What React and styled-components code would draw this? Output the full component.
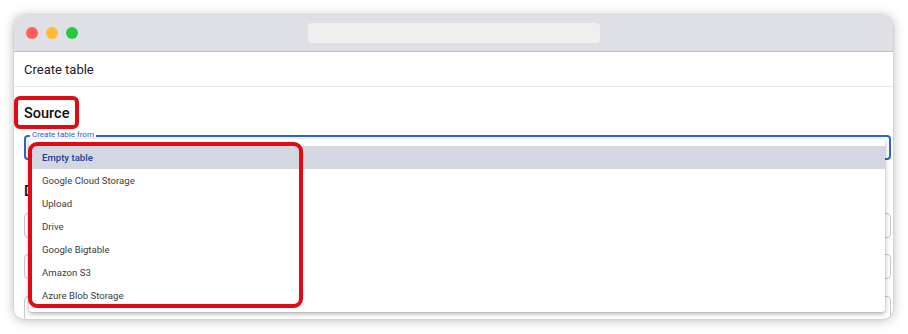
import React from "react";
import styled, { createGlobalStyle } from "styled-components";

const Global = createGlobalStyle`
  * { box-sizing: border-box; }
  html, body { margin: 0; padding: 0; background: #ffffff; }
  body { font-family: Roboto, "Noto Sans", "Liberation Sans", sans-serif; }
`;

const Page = styled.div`
  width: 908px;
  height: 334px;
  padding: 15px 0 0 14px;
  overflow: hidden;
`;

const Window = styled.div`
  position: relative;
  width: 879px;
  height: 304px;
  border-radius: 10px;
  background: #ffffff;
  overflow: hidden;
  box-shadow: 0 1px 12px rgba(0, 0, 0, 0.28), 0 0 2px rgba(0, 0, 0, 0.15);
`;

const TitleBar = styled.div`
  position: relative;
  display: flex;
  align-items: center;
  gap: 8px;
  height: 37px;
  padding: 0 0 1px 12px;
  background: #dfe0e5;
  border-bottom: 1px solid #bdbdc0;
`;

const Light = styled.span`
  width: 12px;
  height: 12px;
  border-radius: 50%;
  background: ${(p) => p.$color};
`;

const AddressBar = styled.div`
  position: absolute;
  left: 294px;
  top: 8px;
  width: 292px;
  height: 20px;
  border-radius: 4px;
  background: #efeff0;
`;

const Header = styled.div`
  display: flex;
  align-items: center;
  height: 35px;
  padding-left: 10px;
  border-bottom: 1px solid #e6e6e8;
  font-size: 13px;
  color: #202124;
`;

const Content = styled.div`
  display: flex;
  flex-direction: column;
  padding: 17px 2px 0 10px;
`;

const SectionTitle = styled.h2`
  position: relative;
  margin: 0;
  height: 20px;
  line-height: 20px;
  font-size: 14.5px;
  font-weight: 500;
  color: #111111;
  margin-top: ${(p) => p.$mt || 0}px;
`;

const Field = styled.div`
  position: relative;
  height: 25px;
  border-radius: 4px;
  border: ${(p) => (p.$active ? "2px solid #2d64d3" : "1px solid #c6c7ca")};
  margin-top: ${(p) => p.$mt}px;
`;

const FieldLabel = styled.span`
  position: absolute;
  left: 4px;
  top: -7px;
  padding: 0 2px;
  background: #ffffff;
  font-size: 8px;
  line-height: 10px;
  color: #2b5bd0;
`;

const Menu = styled.ul`
  position: absolute;
  left: 3px;
  top: 2px;
  width: 856px;
  margin: 0;
  padding: 7px 0 5px;
  list-style: none;
  background: #ffffff;
  border-radius: 3px;
  box-shadow: 0 2px 5px rgba(0, 0, 0, 0.3), 0 0 2px rgba(0, 0, 0, 0.12);
  z-index: 2;
`;

const MenuItem = styled.li`
  display: flex;
  align-items: center;
  height: 23px;
  padding-left: 13px;
  font-size: 9.6px;
  color: ${(p) => (p.$selected ? "#1c3f9e" : "#3c3c3c")};
  font-weight: ${(p) => (p.$selected ? 500 : 400)};
  background: ${(p) => (p.$selected ? "#d3d7e1" : "transparent")};
`;

const Highlight = styled.div`
  position: absolute;
  border: 4px solid #e30b13;
  border-radius: ${(p) => p.$r}px;
  left: ${(p) => p.$l}px;
  top: ${(p) => p.$t}px;
  width: ${(p) => p.$w}px;
  height: ${(p) => p.$h}px;
  pointer-events: none;
  z-index: 3;
`;

const options = [
  "Empty table",
  "Google Cloud Storage",
  "Upload",
  "Drive",
  "Google Bigtable",
  "Amazon S3",
  "Azure Blob Storage",
];

export default function App() {
  return (
    <>
      <Global />
      <Page>
        <Window>
          <TitleBar>
            <Light $color="#fe5f57" />
            <Light $color="#febc2e" />
            <Light $color="#28c840" />
            <AddressBar />
          </TitleBar>
          <Header>Create table</Header>
          <Content>
            <SectionTitle>
              Source
              <Highlight $l={-10} $t={-8} $w={65} $h={33} $r={6} />
            </SectionTitle>
            <Field $active $mt={11}>
              <FieldLabel>Create table from</FieldLabel>
              <Menu>
                {options.map((o, i) => (
                  <MenuItem key={o} $selected={i === 0}>
                    {o}
                  </MenuItem>
                ))}
                <Highlight $l={-1} $t={3} $w={275} $h={166} $r={9} />
              </Menu>
            </Field>
            <SectionTitle $mt={22}>Destination</SectionTitle>
            <Field $mt={11} />
            <Field $mt={16} />
            <Field $mt={17} />
          </Content>
        </Window>
      </Page>
    </>
  );
}
